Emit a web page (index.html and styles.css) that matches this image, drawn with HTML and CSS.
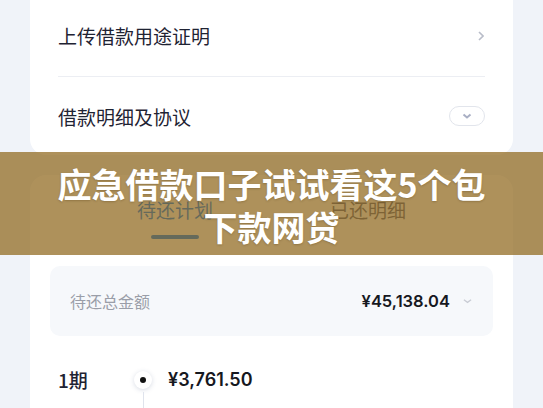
FILE: index.html
```html
<!DOCTYPE html>
<html lang="zh-CN">
  <head>
    <meta charset="UTF-8" />
    <meta name="viewport" content="width=device-width, initial-scale=1.0" />
    <title>借款详情</title>
    <link rel="stylesheet" href="styles.css">
  </head>
  <body>
    <div class="page">
      <div class="card card-top">
        <div class="menu-row">
          <span>上传借款用途证明</span>
          <svg class="arrow-right" viewBox="0 0 6 10">
            <path d="M1 1l4 4-4 4" />
          </svg>
        </div>
        <div class="menu-row">
          <span>借款明细及协议</span>
          <span class="toggle">
            <svg viewBox="0 0 10 6">
              <path d="M1.5 1.5L5 4.5l3.5-3" />
            </svg>
          </span>
        </div>
      </div>

      <div class="card card-plan">
        <div class="tabs">
          <div class="tab active">待还计划</div>
          <div class="tab">已还明细</div>
        </div>

        <div class="total">
          <span class="total-label">待还总金额</span>
          <span class="total-value">
            ¥45,138.04
            <svg class="arrow-down" viewBox="0 0 10 6">
              <path d="M1 1.5L5 4.5l4-3" />
            </svg>
          </span>
        </div>

        <div class="plan-row">
          <div class="period">1期</div>
          <div class="dot"><i></i></div>
          <div class="amount">¥3,761.50</div>
        </div>
        <div class="plan-sub">
          <div class="date">2024/06/15</div>
          <div class="line"></div>
          <div class="detail">
            <span>本金 ¥3,500.00</span>
            <span>利息 ¥261.50</span>
          </div>
        </div>
      </div>

      <!-- title banner laid over the page -->
      <div class="banner">
        <h1>应急借款口子试试看这5个包<br />下款网贷</h1>
      </div>
    </div>
  </body>
</html>
```

FILE: styles.css
```css
:root {
  --page-bg: #f0f3f9;
  --text-color: #1f2333;
  --muted: #9a9ea8;
  --line: #eceef3;
  --primary: #0a7cff;
}

* {
  margin: 0;
  padding: 0;
  box-sizing: border-box;
  font-family: "Noto Sans CJK SC", "Noto Sans", sans-serif;
}

body {
  background-color: var(--page-bg);
  color: var(--text-color);
  overflow: hidden;
}

.page {
  position: relative;
  height: 408px;
  overflow: hidden;
  padding: 0 30px;
}

.card {
  background-color: #fff;
  border-radius: 16px;
}

.card-top {
  margin-top: -3px;
  border-radius: 0 0 16px 16px;
  padding: 0 28px;
}

.menu-row {
  display: flex;
  align-items: center;
  justify-content: space-between;
  height: 79px;
  font-size: 19px;
}

.menu-row:first-child {
  padding-bottom: 2px;
}

.menu-row + .menu-row {
  border-top: 1px solid var(--line);
}

.arrow-right {
  width: 6px;
  height: 10px;
  margin-right: 1px;
  fill: none;
  stroke: #b9bdc9;
  stroke-width: 1.6;
}

.toggle {
  display: flex;
  align-items: center;
  justify-content: center;
  width: 36px;
  height: 20px;
  border: 1px solid #e2e5ec;
  border-radius: 10px;
}

.toggle svg {
  width: 10px;
  height: 6px;
  fill: none;
  stroke: #a9afc4;
  stroke-width: 2;
}

.card-plan {
  margin-top: 20px;
  padding: 0 20px;
  height: 260px;
  border-radius: 16px 16px 0 0;
}

.tabs {
  display: flex;
  justify-content: center;
  height: 64px;
}

.tab {
  position: relative;
  width: 193px;
  text-align: center;
  font-size: 19px;
  line-height: 20px;
  padding-top: 25px;
  color: #5e6782;
}

.tab.active {
  color: var(--primary);
}

.tab.active::after {
  content: "";
  position: absolute;
  left: 50%;
  bottom: 0;
  width: 48px;
  height: 4px;
  margin-left: -24px;
  border-radius: 2px;
  background-color: var(--primary);
}

.total {
  display: flex;
  align-items: center;
  justify-content: space-between;
  margin-top: 27px;
  height: 70px;
  padding: 0 21px 0 20px;
  background-color: #f6f8fb;
  border-radius: 10px;
}

.total-label {
  font-size: 16px;
  color: var(--muted);
}

.total-value {
  display: flex;
  align-items: center;
  gap: 13px;
  font-family: "Inter", "Noto Sans", sans-serif;
  font-size: 16.5px;
  font-weight: 600;
  color: #16181f;
}

.arrow-down {
  width: 9px;
  height: 6px;
  fill: none;
  stroke: #c9ccd4;
  stroke-width: 1.4;
}

.plan-row,
.plan-sub {
  display: grid;
  grid-template-columns: 76px 18px 1fr;
  padding-left: 8px;
  align-items: center;
}

.plan-row {
  margin-top: 30px;
  height: 26px;
}

.period {
  font-size: 19px;
  font-weight: 500;
}

.dot {
  display: flex;
  align-items: center;
  justify-content: center;
  width: 18px;
  height: 18px;
  border-radius: 50%;
  background-color: #fff;
  box-shadow: 0 1px 5px rgba(40, 60, 110, 0.18);
}

.dot i {
  width: 6px;
  height: 6px;
  border-radius: 50%;
  background-color: #111;
}

.amount {
  padding-left: 16px;
  font-family: "Inter", "Noto Sans", sans-serif;
  font-size: 18px;
  font-weight: 600;
  color: #16181f;
}

.plan-sub {
  align-items: start;
  height: 40px;
  font-size: 14px;
  color: var(--muted);
}

.line {
  justify-self: center;
  width: 1px;
  height: 40px;
  background-color: #dfe3ec;
}

.date {
  padding-top: 15px;
}

.detail {
  display: flex;
  gap: 40px;
  padding: 15px 0 0 16px;
}

.banner {
  position: absolute;
  top: 152px;
  left: 0;
  right: 0;
  height: 103px;
  display: flex;
  align-items: center;
  justify-content: center;
  background-color: rgba(139, 99, 22, 0.7);
}

.banner h1 {
  font-size: 34px;
  font-weight: 700;
  line-height: 43px;
  text-align: center;
  color: #fff;
  text-shadow: 0 1px 2px rgba(60, 40, 0, 0.25);
  margin-top: 2px;
}
```
